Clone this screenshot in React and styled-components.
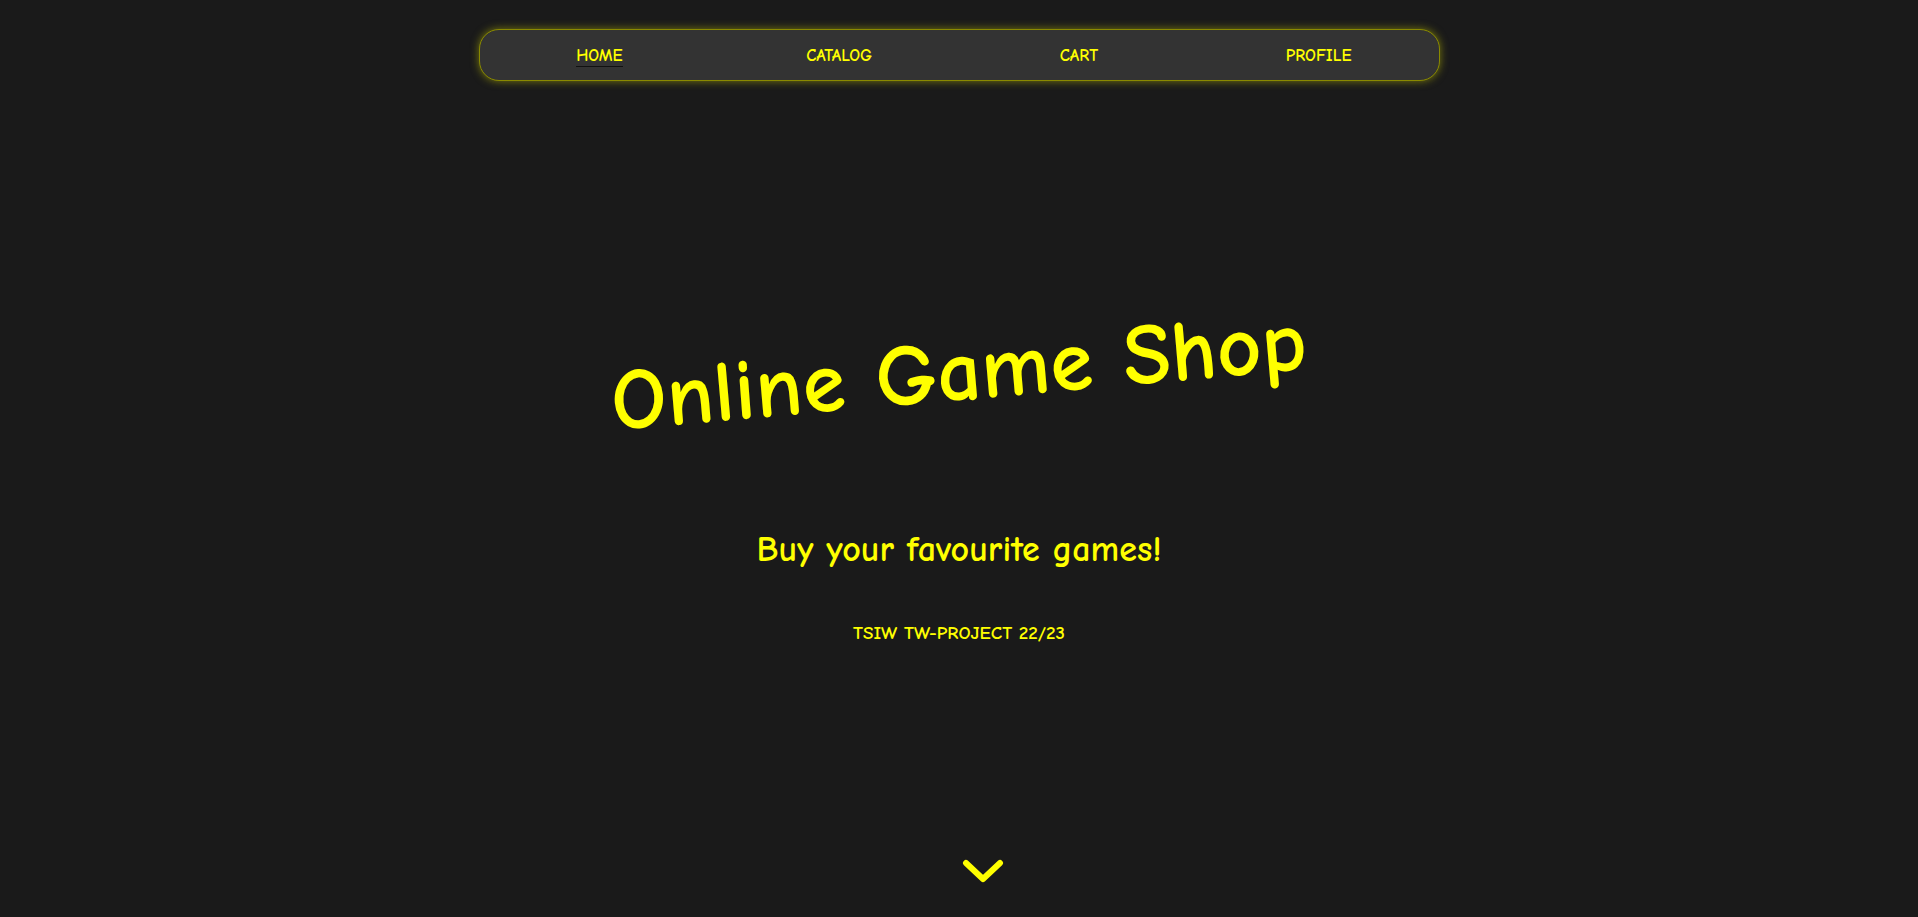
import React from "react";
import styled, { createGlobalStyle } from "styled-components";

const yellow = "#ffff00";
const font = `"Comic Sans MS", "Comic Neue", "Open Sans", sans-serif`;

const GlobalStyle = createGlobalStyle`
  html, body {
    margin: 0;
    padding: 0;
    background-color: #1a1a1a;
    font-family: ${font};
    color: ${yellow};
  }
`;

const Page = styled.div`
  height: 917px;
  display: flex;
  flex-direction: column;
  align-items: center;
  overflow: hidden;
`;

const NavBar = styled.nav`
  margin-top: 29px;
  width: 961px;
  height: 52px;
  box-sizing: border-box;
  display: grid;
  grid-template-columns: repeat(4, 1fr);
  align-items: center;
  background-color: #333333;
  border: 1px solid #8a8a00;
  border-radius: 20px;
  box-shadow: 0 0 8px rgba(200, 200, 0, 0.55);
`;

const NavLink = styled.a`
  justify-self: center;
  font-size: 17px;
  font-weight: 700;
  color: ${yellow};
  text-decoration: none;
  padding-top: 2px;
  border-bottom: 1px solid ${(p) => (p.active ? "#111" : "transparent")};
  line-height: 20px;
  cursor: pointer;
`;

const Hero = styled.section`
  flex: 1;
  display: flex;
  flex-direction: column;
  align-items: center;
`;

const Title = styled.h1`
  margin: 244px 0 0;
  font-size: 87px;
  font-weight: 700;
  color: ${yellow};
  transform: rotate(-5deg);
  line-height: 1.1;
`;

const Subtitle = styled.h2`
  margin: 108px 0 0;
  font-size: 36px;
  font-weight: 700;
  color: ${yellow};
`;

const Credits = styled.p`
  margin: 52px 0 0;
  font-size: 19px;
  font-weight: 700;
  color: ${yellow};
`;

const ScrollDown = styled.div`
  margin-top: auto;
  margin-bottom: 34px;
  margin-left: 48px;
  width: 42px;
  height: 24px;
  display: flex;
`;

const Chevron = () => (
  <svg width="42" height="24" viewBox="0 0 42 24" fill="none">
    <path
      d="M4 4 L21 20 L38 4"
      stroke={yellow}
      strokeWidth="6"
      strokeLinecap="round"
      strokeLinejoin="round"
    />
  </svg>
);

const links = ["HOME", "CATALOG", "CART", "PROFILE"];

export default function App() {
  return (
    <Page>
      <GlobalStyle />
      <NavBar>
        {links.map((l, i) => (
          <NavLink key={l} active={i === 0 ? 1 : 0}>
            {l}
          </NavLink>
        ))}
      </NavBar>
      <Hero>
        <Title>Online Game Shop</Title>
        <Subtitle>Buy your favourite games!</Subtitle>
        <Credits>TSIW TW-PROJECT 22/23</Credits>
        <ScrollDown>
          <Chevron />
        </ScrollDown>
      </Hero>
    </Page>
  );
}
